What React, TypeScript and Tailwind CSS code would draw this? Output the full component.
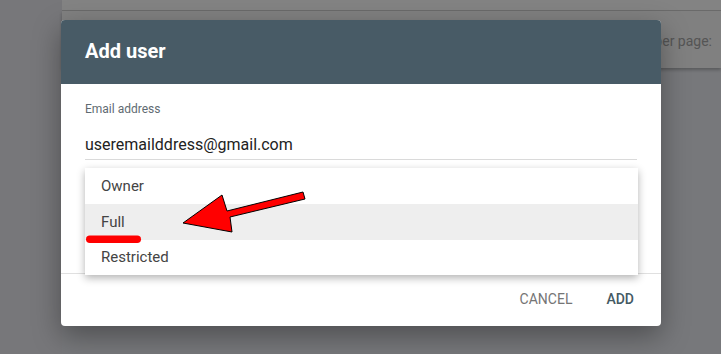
import React from "react";

const roles = ["Owner", "Full", "Restricted"];

export default function App() {
  const active = "Full";

  return (
    <div
      className="relative h-[354px] w-[721px] overflow-hidden bg-[#77787b]"
      style={{ fontFamily: "Roboto, 'Liberation Sans', sans-serif" }}
    >
      {/* page behind the overlay (already dimmed) */}
      <div className="flex h-full">
        <div className="w-[62px] bg-[#77777a]" />
        <div className="flex-1">
          <div className="h-[11px] border-b border-[#6c6c6c] bg-[#838383]" />
          <div className="flex h-[57px] items-start justify-end bg-[#808080] pr-[9px] pt-[20px] shadow-[0_2px_3px_rgba(0,0,0,0.25)]">
            <span className="text-[14px] leading-5 text-[#555]">Rows per page:</span>
          </div>
        </div>
      </div>

      {/* dialog */}
      <div className="absolute inset-0 pl-[61px] pt-[20px]">
        <div className="relative flex h-[306px] w-[600px] flex-col overflow-hidden rounded bg-white shadow-[0_10px_28px_rgba(0,0,0,0.35)]">
          <div className="flex h-[64px] shrink-0 items-center bg-[#485b66] px-6 pb-[3px]">
            <h2 className="text-[20px] font-bold text-white">Add user</h2>
          </div>

          <div className="h-[189px] shrink-0 px-6 pt-[17px]">
            <div className="text-[12px] leading-4 text-[#5f6b72]">Email address</div>
            <div className="mt-4 border-b border-[#dadada] pb-[2px] text-[16px] leading-6 text-[#222]">
              useremailddress@gmail.com
            </div>
          </div>

          <div className="flex flex-1 items-center justify-end gap-[34px] border-t border-[#e0e0e0] pb-[2px] pr-[27px] text-[14px]">
            <button className="uppercase text-[#757575]">Cancel</button>
            <button className="font-medium uppercase text-[#455a64]">Add</button>
          </div>

          {/* role menu */}
          <ul className="absolute left-6 top-[148px] w-[553px] bg-white shadow-[0_3px_8px_rgba(0,0,0,0.3)]">
            {roles.map((r) => (
              <li
                key={r}
                className={`flex h-9 items-center px-4 text-[15px] text-[#444] last:h-[35px] ${
                  r === active ? "bg-[#eeeeee]" : ""
                }`}
              >
                {r}
              </li>
            ))}
          </ul>
        </div>
      </div>

      {/* annotation */}
      <svg className="pointer-events-none absolute inset-0" width="721" height="354" viewBox="0 0 721 354">
        <rect x="86" y="235.5" width="55" height="7.5" rx="3.75" fill="#ff0000" />
        <polygon
          points="183,223 222,195 227,211 303,192 305,199 230,217 232,232"
          fill="#ff0000"
          stroke="#000"
          strokeWidth="1"
        />
      </svg>
    </div>
  );
}
